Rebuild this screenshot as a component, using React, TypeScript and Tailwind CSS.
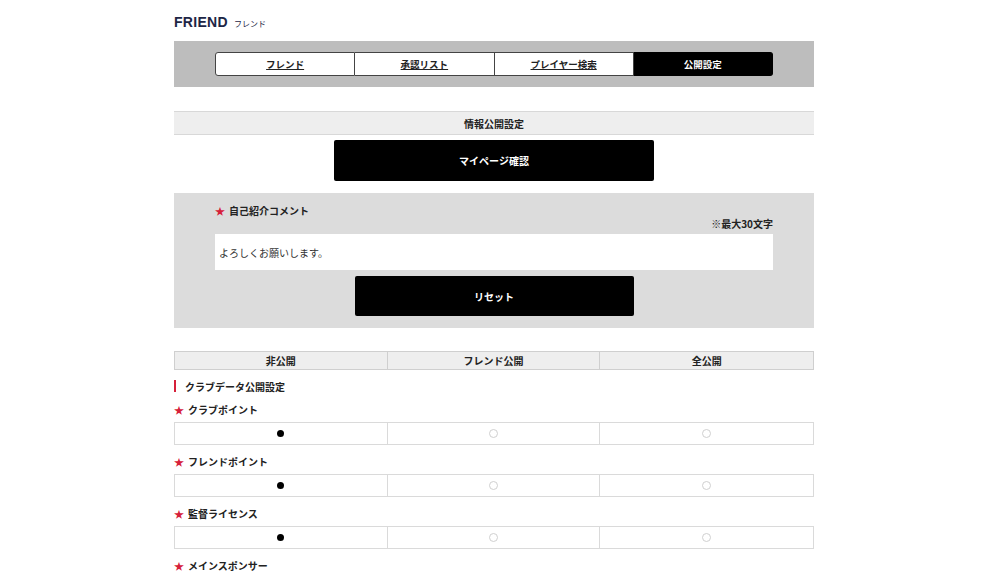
import React from "react";

const tabs = [
  { id: "friend", label: "フレンド" },
  { id: "approve", label: "承認リスト" },
  { id: "search", label: "プレイヤー検索" },
  { id: "public", label: "公開設定", active: true },
];

const settings = [
  { id: "club", label: "クラブポイント" },
  { id: "friend", label: "フレンドポイント" },
  { id: "license", label: "監督ライセンス" },
];

function Star() {
  return <span className="text-[#d6203a] text-[10px] mr-1">★</span>;
}

function Radio({ checked }: { checked?: boolean }) {
  return checked ? (
    <span className="block w-[7px] h-[7px] rounded-full bg-black" />
  ) : (
    <span className="block w-[9px] h-[9px] rounded-full border border-[#d0d0d0] bg-white" />
  );
}

export default function App() {
  return (
    <div
      className="w-[1000px] min-h-[579px] bg-white text-[#222]"
      style={{ fontFamily: '"Noto Sans CJK JP", "Noto Sans", sans-serif' }}
    >
      <div className="w-[640px] ml-[174px] pt-[12px]">
        <div className="flex items-baseline h-[20px]">
          <span
            className="text-[14px] font-bold text-[#1d2645] tracking-[0.3px]"
            style={{ fontFamily: '"Liberation Sans", "Noto Sans CJK JP", sans-serif' }}
          >
            FRIEND
          </span>
          <span className="ml-[6px] text-[8px] text-[#1d2645]">フレンド</span>
        </div>

        <div className="mt-[9px] h-[46px] bg-[#bdbdbd] flex items-center justify-center">
          <div className="flex w-[558px] h-[24px]">
            {tabs.map((t, i) => (
              <div
                key={t.id}
                className={
                  "flex-1 flex items-center justify-center text-[9.5px] font-bold border-y border-[#444] " +
                  (t.active ? "bg-black text-white border-r border-black rounded-r-[3px]" : "bg-white text-[#222] underline border-r ") +
                  (i === 0 ? " border-l rounded-l-[3px]" : "")
                }
              >
                {t.label}
              </div>
            ))}
          </div>
        </div>

        <div className="mt-[24px] h-[24px] bg-[#eeeeee] border-y border-[#d8d8d8] flex items-center justify-center text-[10px] font-bold">
          情報公開設定
        </div>

        <div className="flex justify-center mt-[5px]">
          <button className="w-[320px] h-[41px] bg-black text-white text-[10px] font-bold rounded-[2px]">
            マイページ確認
          </button>
        </div>

        <div className="mt-[12px] h-[135px] bg-[#dcdcdc] px-[41px] pt-[10px]">
          <div className="text-[10px] font-bold flex items-center">
            <Star />
            自己紹介コメント
          </div>
          <div className="text-right text-[10px] font-bold mt-[-2px]">※最大30文字</div>
          <div className="mt-[3px] h-[36px] bg-white flex items-center px-[4px] text-[10px] text-[#333]">
            よろしくお願いします。
          </div>
          <div className="flex justify-center mt-[6px]">
            <button className="w-[279px] h-[40px] bg-black text-white text-[10px] font-bold rounded-[2px]">
              リセット
            </button>
          </div>
        </div>

        <div className="mt-[23px] grid grid-cols-3 h-[19px] bg-[#eeeeee] border border-[#cfcfcf] text-[10px] font-bold">
          <div className="flex items-center justify-center border-r border-[#cfcfcf]">非公開</div>
          <div className="flex items-center justify-center border-r border-[#cfcfcf]">フレンド公開</div>
          <div className="flex items-center justify-center">全公開</div>
        </div>

        <div className="mt-[9px] flex items-center text-[10px] font-bold h-[14px]">
          <span className="w-[2px] h-[12px] bg-[#d6203a] mr-[9px]" />
          クラブデータ公開設定
        </div>

        {settings.map((s) => (
          <div key={s.id}>
            <div className="mt-[9px] flex items-center text-[10px] font-bold h-[14px]">
              <Star />
              {s.label}
            </div>
            <div className="mt-[6px] grid grid-cols-3 h-[23px] border border-[#dadada]">
              <div className="flex items-center justify-center border-r border-[#dadada]">
                <Radio checked />
              </div>
              <div className="flex items-center justify-center border-r border-[#dadada]">
                <Radio />
              </div>
              <div className="flex items-center justify-center">
                <Radio />
              </div>
            </div>
          </div>
        ))}

        <div className="mt-[9px] flex items-center text-[10px] font-bold h-[14px]">
          <Star />
          メインスポンサー
        </div>
      </div>
    </div>
  );
}
